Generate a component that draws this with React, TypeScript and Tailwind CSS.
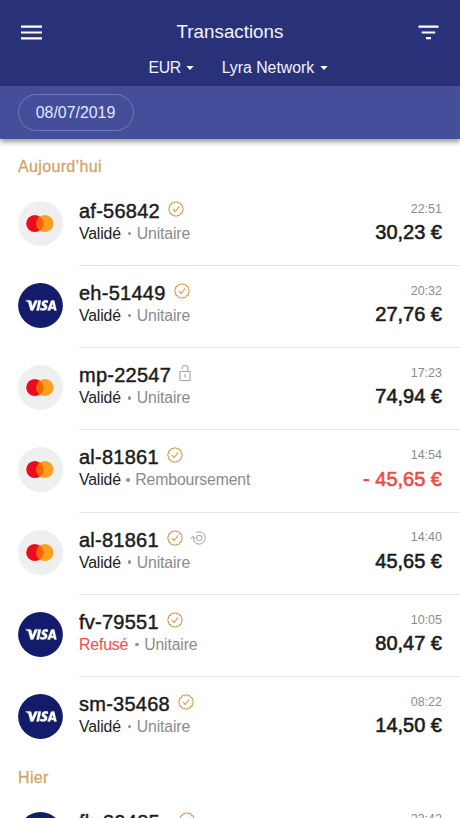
type IconName = "ok" | "lock" | "refund";

type Tx = {
  brand: "mc" | "visa";
  id: string;
  icons: IconName[];
  refused?: boolean;
  kind: string;
  time: string;
  amount: string;
};

const today: Tx[] = [
  { brand: "mc", id: "af-56842", icons: ["ok"], kind: "Unitaire", time: "22:51", amount: "30,23 €" },
  { brand: "visa", id: "eh-51449", icons: ["ok"], kind: "Unitaire", time: "20:32", amount: "27,76 €" },
  { brand: "mc", id: "mp-22547", icons: ["lock"], kind: "Unitaire", time: "17:23", amount: "74,94 €" },
  { brand: "mc", id: "al-81861", icons: ["ok"], kind: "Remboursement", time: "14:54", amount: "- 45,65 €" },
  { brand: "mc", id: "al-81861", icons: ["ok", "refund"], kind: "Unitaire", time: "14:40", amount: "45,65 €" },
  { brand: "visa", id: "fv-79551", icons: ["ok"], refused: true, kind: "Unitaire", time: "10:05", amount: "80,47 €" },
  { brand: "visa", id: "sm-35468", icons: ["ok"], kind: "Unitaire", time: "08:22", amount: "14,50 €" },
];

const yesterday: Tx[] = [
  { brand: "visa", id: "fh-39485", icons: ["ok"], kind: "Unitaire", time: "23:42", amount: "62,10 €" },
];

// Scalloped outline of the "verified" badge.
const scallops = (() => {
  const n = 12;
  const pt = (i: number) => {
    const a = (i / n) * Math.PI * 2 - Math.PI / 2 + Math.PI / n;
    return `${(8 + 6.5 * Math.cos(a)).toFixed(2)} ${(8 + 6.5 * Math.sin(a)).toFixed(2)}`;
  };
  let d = `M${pt(0)}`;
  for (let i = 1; i <= n; i++) d += `A1.900 1.900 0 0 1 ${pt(i)}`;
  return d + "Z";
})();

function StatusIcon({ name }: { name: IconName }) {
  if (name === "ok")
    return (
      <svg className="size-4 shrink-0" viewBox="0 0 16 16" fill="none" stroke="#d0a662" strokeWidth="1.15">
        <path d={scallops} />
        <path d="M5 8l2.200 2.500 4-5.200" />
      </svg>
    );
  if (name === "lock")
    return (
      <svg className="h-[17px] w-3 shrink-0" viewBox="0 0 12 17" fill="none" stroke="#a3a3a3" strokeWidth="1.1">
        <path d="M1 6.500h10v9H1zM3 4.300V3.500a2.900 2.900 0 0 1 5.900 0V6.500M5.200 9.700H6.200V12.500" />
      </svg>
    );
  return (
    <svg className="h-4 w-[17px] shrink-0" viewBox="0 0 17 16" fill="none" stroke="#b5b5b5" strokeWidth="1.15">
      <path d="M3.200 9.200V8A6.100 6.100 0 1 1 6.200 13.300" transform="matrix(1 0 0 -1 0 16)" />
      <path d="M.8 8.600L3.100 6.300l2.300 2.300" />
      <circle cx="9.300" cy="8" r="2.700" />
    </svg>
  );
}

function Brand({ brand }: { brand: "mc" | "visa" }) {
  if (brand === "mc")
    return (
      <svg className="size-[45px] shrink-0" viewBox="0 0 45 45">
        <circle cx="22.500" cy="22.500" r="22.400" fill="#efefef" />
        <circle cx="16.800" cy="22.500" r="8.600" fill="#eb0a1e" />
        <circle cx="26.900" cy="22.500" r="8.600" fill="#f9a01f" />
        <path d="M21.850 15.540A8.600 8.600 0 0 1 21.850 29.460A8.600 8.600 0 0 1 21.850 15.540Z" fill="#ff6200" />
      </svg>
    );
  return (
    <svg className="size-[45px] shrink-0" viewBox="0 0 45 45">
      <circle cx="22.500" cy="22.500" r="22.400" fill="#131c6b" />
      {/* Visa brand mark */}
      <g fill="#fff" stroke="#fff" strokeWidth=".35" transform="translate(7.900 17.400)">
        <path d="M0 0H4.100Q5.200 0 5.400 1L6.400 6.200L9 0H11.700L7.300 10H4.700L2.600 2.300Q2.300 1.400 0 .7Z" />
        <path d="M12.500 0H15L13.100 10H10.600Z" />
        <path d="M22.100 .4L21.700 2.500C20.400 1.900 18.500 1.700 18.400 2.700C18.400 3.700 21.500 4 21.300 6.800C21 10 17.400 10.700 14.200 9.600L14.600 7.400C16.300 8.300 18.600 8.300 18.700 7.200C18.700 6 15.700 6 15.900 3.200C16.200 .2 19.300 -.7 22.100 .4Z" />
        <path fillRule="evenodd" d="M26 0H28.300L30.600 10H28.300L28 8.400H24.800L24.200 10H21.600L25.100 .7Q25.400 0 26 0ZM26.800 3L25.500 6.500H27.500Z" />
      </g>
    </svg>
  );
}

function Row({ tx, last, wide }: { tx: Tx; last: boolean; wide: boolean }) {
  const negative = tx.amount.startsWith("-");
  return (
    <li className="flex h-[82.2px] pl-[17.500px]">
      <div className="pt-[17px]">
        <Brand brand={tx.brand} />
      </div>
      <div className={`ml-[16.500px] flex flex-1 justify-between border-b pr-[18px] ${last ? "border-transparent" : "border-[#e6e6e6]"}`}>
        <div className="pt-[15px]">
          <div className="flex h-6 items-center">
            <span className="text-[20px] leading-6 tracking-[0.25px] text-[#1c1c1c] [-webkit-text-stroke:0.45px_currentColor]">{tx.id}</span>
            <span className={`-mt-1 flex items-center gap-[7px] ${wide ? "ml-[19px]" : "ml-2"}`}>
              {tx.icons.map((n) => (
                <StatusIcon key={n} name={n} />
              ))}
            </span>
          </div>
          <div className="flex h-[21px] items-center text-[15.800px] leading-[21px] tracking-[-0.15px]">
            <span className={tx.refused ? "text-[#f8474b]" : "text-[#222]"}>{tx.refused ? "Refusé" : "Validé"}</span>
            <span className={`size-[3.500px] rounded-full bg-[#909090] ${tx.kind === "Unitaire" ? "ml-[7px]" : "ml-[5.500px]"}`} />
            <span className="ml-[5.500px] text-[#8b8b8b]">{tx.kind}</span>
          </div>
        </div>
        <div className="flex flex-col items-end pt-[16.700px]">
          <span className="text-[12.500px] leading-4 text-[#8b8b8b]">{tx.time}</span>
          <span className={`mt-[3.500px] text-[20px] leading-6 [-webkit-text-stroke:0.6px_currentColor] ${negative ? "text-[#f04a48]" : "text-[#1c1c1c]"}`}>{tx.amount}</span>
        </div>
      </div>
    </li>
  );
}

function Section({ title, items, wide = false }: { title: string; items: Tx[]; wide?: boolean }) {
  return (
    <section>
      <h2 className="h-[35.600px] pl-[18px] text-[16px] leading-[37px] tracking-[0.35px] text-[#cfa664] [-webkit-text-stroke:0.3px_currentColor]">{title}</h2>
      <ul>
        {items.map((tx, i) => (
          <Row key={i} tx={tx} last={i === items.length - 1} wide={wide} />
        ))}
      </ul>
    </section>
  );
}

function Caret() {
  return (
    <svg className="h-1 w-2" viewBox="0 0 8 4" fill="#fff">
      <path d="M.3 0h7.400L4 4z" />
    </svg>
  );
}

export default function App() {
  return (
    <div className="h-[818px] w-[460px] overflow-hidden bg-white font-['Liberation_Sans',Arial,sans-serif]">
      <header className="shadow-[0_3px_5px_rgba(0,0,0,0.4)]">
        <div className="h-[86px] bg-[#293279] pt-5 text-[#f1f3ff]">
          <div className="flex h-6 items-center justify-between px-[21px]">
            <svg className="h-[15px] w-[21px]" viewBox="0 0 21 15" fill="#fff">
              <path d="M0 .5h21v2.200H0zM0 6.400h21v2.200H0zM0 12.300h21v2.200H0z" />
            </svg>
            <h1 className="text-[18.800px] leading-6">Transactions</h1>
            <svg className="h-[15px] w-[21px]" viewBox="0 0 21 15" fill="#fff">
              <path d="M.5 .5h20v2.200H.5zM3.700 6.400h13.500v2.200H3.700zM8 12h5v2.200H8z" />
            </svg>
          </div>
          <div className="mt-3 flex h-6 items-center pl-[148.500px] text-[15.800px]">
            <span className="tracking-[-0.4px]">EUR</span>
            <span className="ml-[5.500px]"><Caret /></span>
            <span className="ml-[27.500px]">Lyra Network</span>
            <span className="ml-[6px]"><Caret /></span>
          </div>
        </div>
        <div className="flex h-[53px] items-center bg-[#454e9a] pl-[18px]">
          <span className="flex h-[37px] w-[116px] items-center justify-center rounded-full border border-[#7079bd] pr-px text-[15.900px] text-[#e3e7ff]">08/07/2019</span>
        </div>
      </header>
      <main className="pt-[9.300px]">
        <Section title="Aujourd’hui" items={today} />
        <Section title="Hier" items={yesterday} wide />
      </main>
    </div>
  );
}
